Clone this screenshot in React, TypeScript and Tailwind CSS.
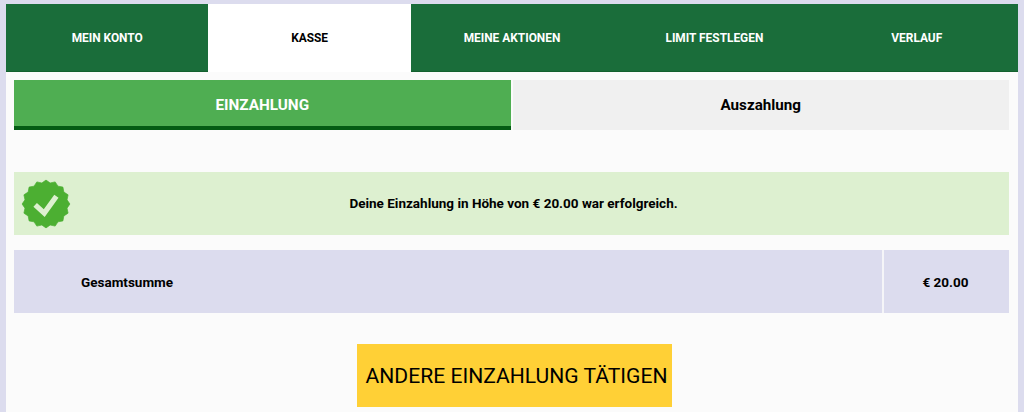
const tabs = ['MEIN KONTO', 'KASSE', 'MEINE AKTIONEN', 'LIMIT FESTLEGEN', 'VERLAUF']

function BadgeIcon() {
  // 16 point seal
  const points = Array.from({ length: 32 }, (_, i) => {
    const r = i % 2 === 0 ? 27.6 : 24.8
    const a = (Math.PI * i) / 16 - Math.PI / 2
    return `${(30 + r * Math.cos(a)).toFixed(1)},${(30 + r * Math.sin(a)).toFixed(1)}`
  }).join(' ')
  return (
    <svg viewBox="0 0 60 60" className="w-[52px] h-[52px] shrink-0">
      <polygon points={points} fill="#4caf32" stroke="#4caf32" strokeWidth="0.8" strokeLinejoin="round" />
      <path d="M17.5 31 L28 40.5 L42 21" fill="none" stroke="#ddf0d0" strokeWidth="6" />
    </svg>
  )
}

export default function App() {
  return (
    <div className="h-[412px] overflow-hidden bg-[#dcdcee] pl-[6px] pr-[6px] pt-[4px] font-['Roboto',sans-serif]">
      <div className="h-[408px] bg-[#fbfbfb]">
        <nav className="grid grid-cols-5 h-[68px]">
          {tabs.map((t) => (
            <div
              key={t}
              className={
                'flex items-center justify-center text-[11.9px] font-bold ' +
                (t === 'KASSE' ? 'pt-[1px] bg-white text-black' : 'pt-[2px] bg-[#1a6d3a] border-b border-[#14612f] text-white')
              }
            >
              {t}
            </div>
          ))}
        </nav>

        <div className="pl-2 pr-[9px] pt-2">
          <div className="flex gap-[2px] h-[50px]">
            <div className="flex-1 flex items-center justify-center bg-[#4fae52] border-b-4 border-[#045c14] pt-1 text-white text-[15.3px] font-bold">
              EINZAHLUNG
            </div>
            <div className="flex-1 flex items-center justify-center bg-[#f0f0f0] text-black text-[15.2px] font-bold">
              Auszahlung
            </div>
          </div>

          <div className="mt-[42px] h-[63px] flex items-center bg-[#ddf0d0] pl-[6px]">
            <BadgeIcon />
            <div className="flex-1 text-center text-[13.5px] font-bold text-black pr-[54px]">
              Deine Einzahlung in Höhe von € 20.00 war erfolgreich.
            </div>
          </div>

          <div className="mt-[15px] h-[63px] flex bg-[#dcdcee] text-black text-[13.5px] font-bold">
            <div className="flex-1 flex items-center pl-[67px] pt-[2px] border-r-2 border-[#f5f5f8]">Gesamtsumme</div>
            <div className="w-[125px] flex items-center justify-center pt-[2px] pr-[2px]">€ 20.00</div>
          </div>

          <div className="mt-[31px] flex justify-center pl-[6px]">
            <button className="w-[315px] h-[63px] bg-[#ffd036] text-black text-[21.1px] pl-[4px]">
              ANDERE EINZAHLUNG TÄTIGEN
            </button>
          </div>
        </div>
      </div>
    </div>
  )
}
